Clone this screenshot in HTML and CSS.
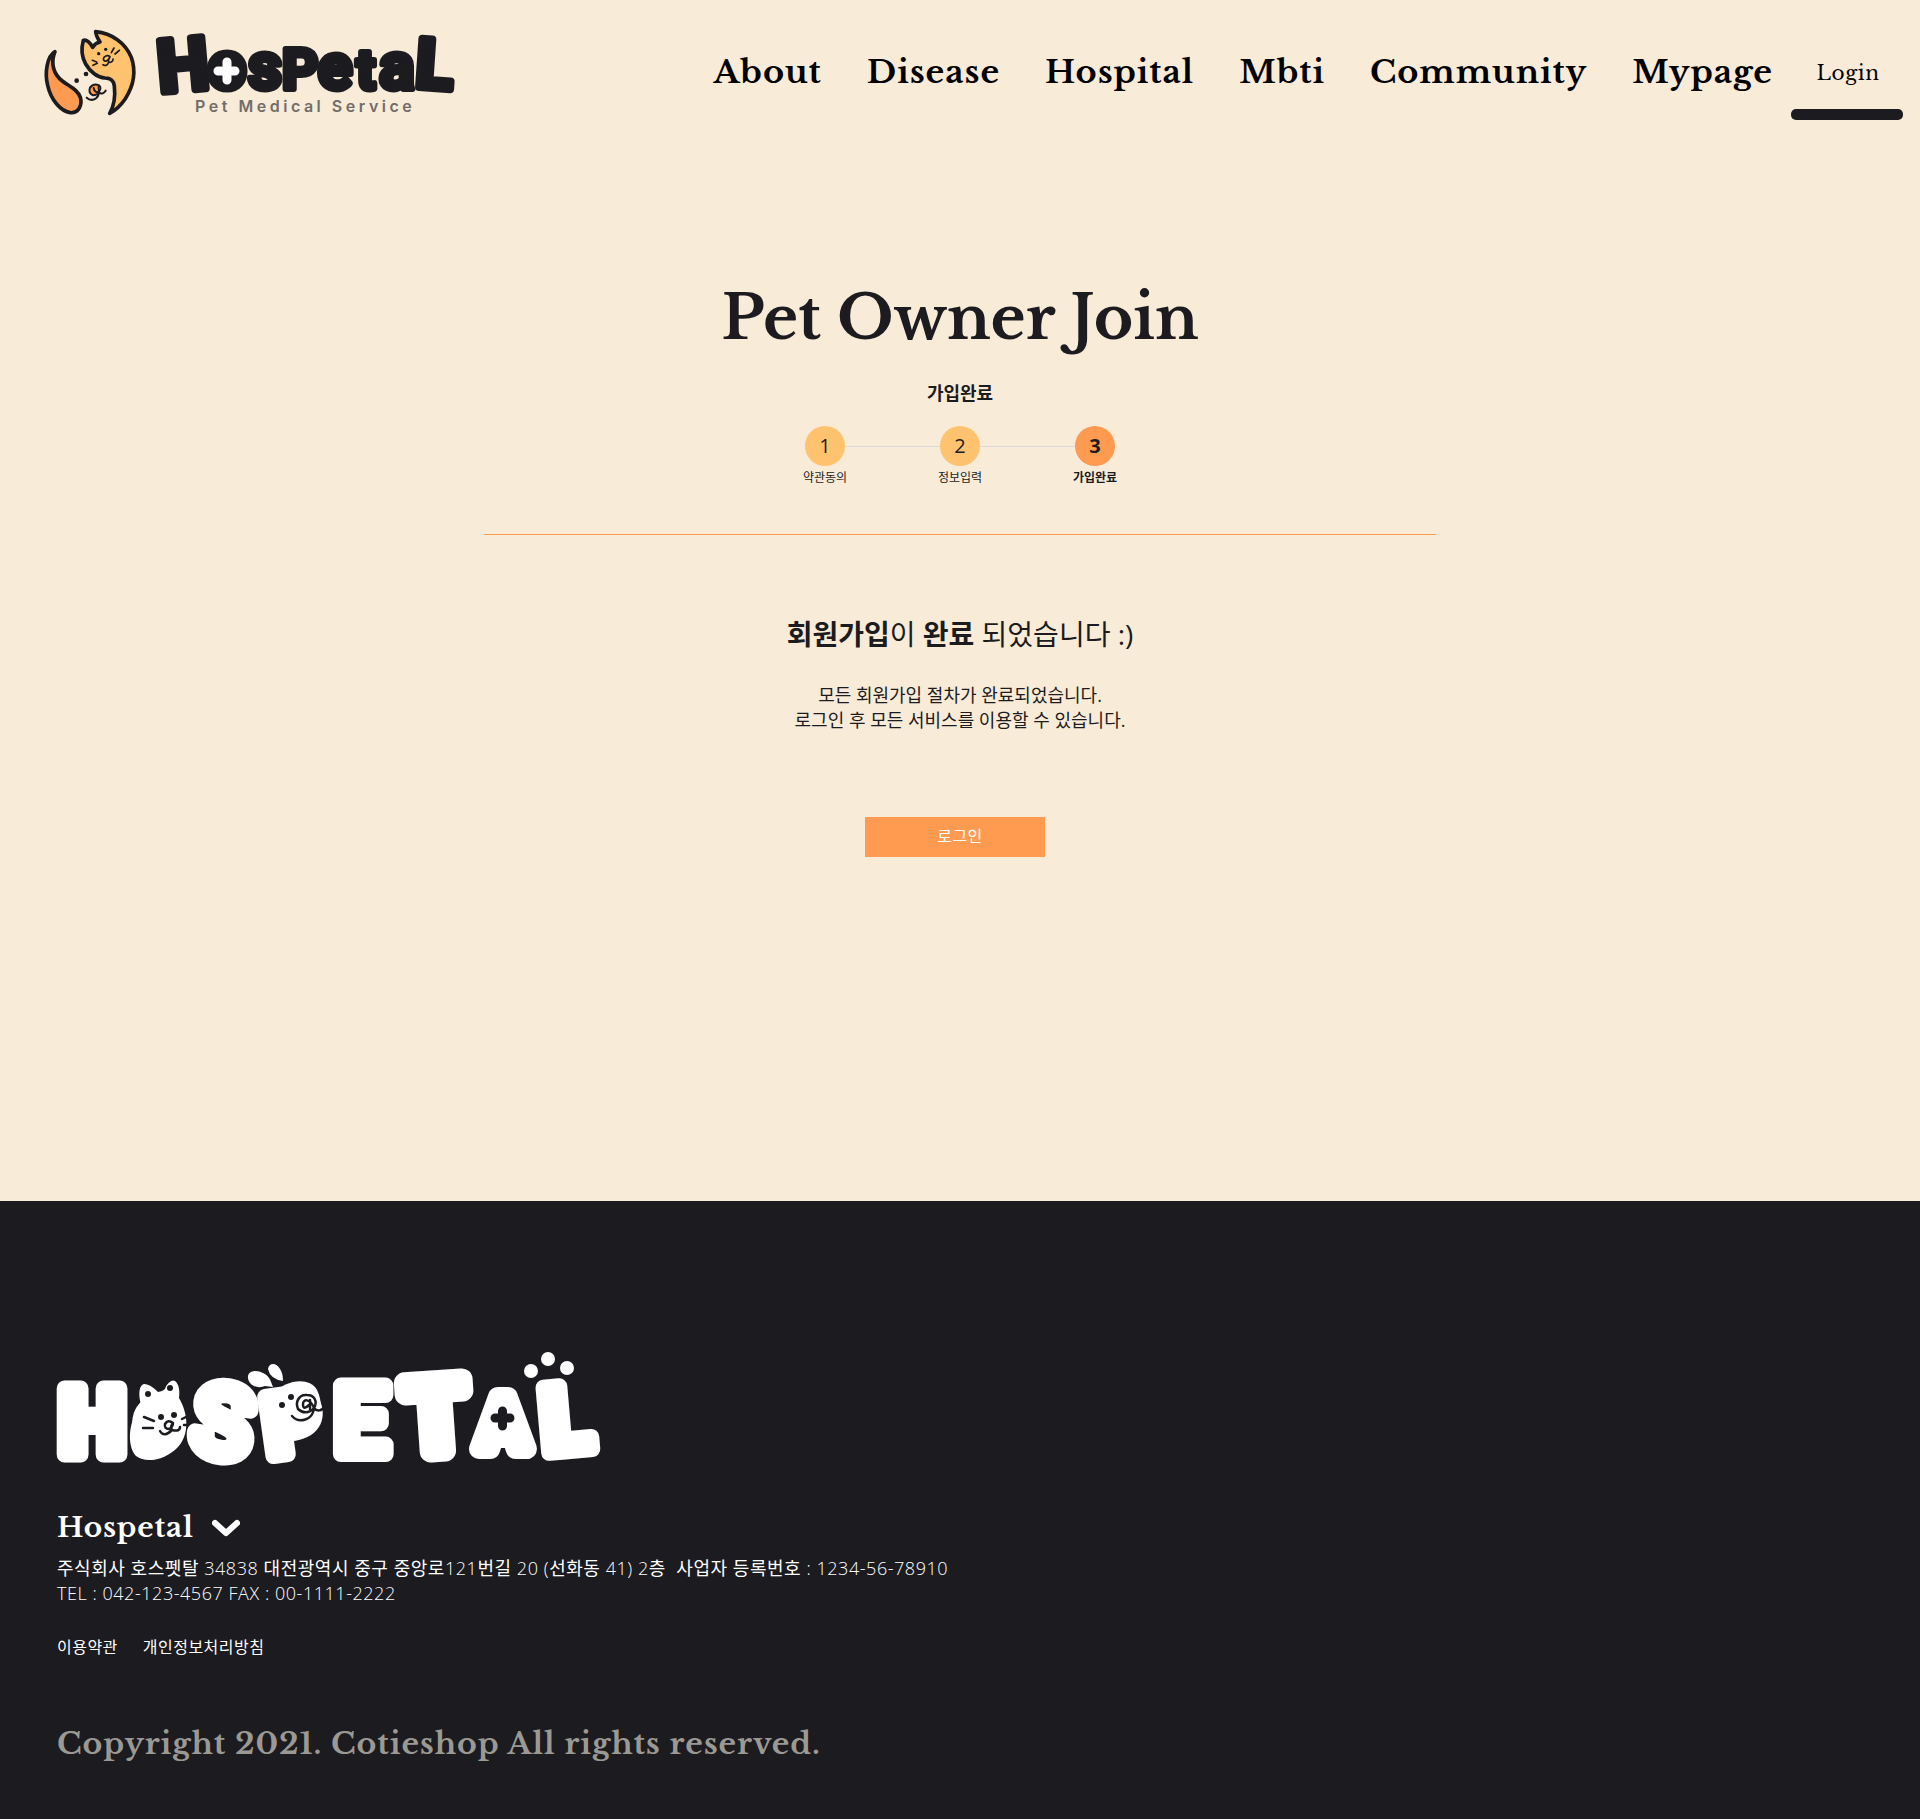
FILE: index.html
```html
<!DOCTYPE html>
<html lang="ko">
<head>
<meta charset="utf-8">
<meta name="viewport" content="width=device-width, initial-scale=1">
<title>Hospetal</title>
<link rel="stylesheet" href="styles.css">
</head>
<body>
<header class="header">
  <a class="brand" href="#" aria-label="Hospetal Pet Medical Service">
    <svg class="mascot" viewBox="36 24 300 264" aria-hidden="true">
      <g fill="none" stroke="#1c1b20" stroke-linecap="round" stroke-linejoin="round">
        <path d="M75 95C50 110 44 160 53 196C63 241 92 273 121 278C145 280 158 256 151 232C143 207 117 199 97 183C70 162 61 129 75 95Z" fill="#ff9b50" stroke-width="11"/>
        <path d="M197 35C246 40 286 69 304 112C319 155 310 198 286 236C273 255 257 271 239 280C252 258 256 225 253 198C251 180 241 174 225 174C203 173 180 155 167 132C154 109 154 83 160 61C169 57 181 69 188 82C193 73 201 68 210 66C204 57 198 47 197 35Z" fill="#ffc26f" stroke-width="11"/>
        <path d="M219 134Q231 141 236 127Q249 128 249 117M236 127Q234 118 240 110Q232 103 223 111Q217 119 224 123Q233 126 240 110M187 121L200 126M189 136L202 130M244 98L252 84M255 102L268 91" stroke-width="5"/>
        <path d="M170 233Q183 245 198 235Q207 228 206 217Q218 226 227 212" stroke-width="6"/>
        <path d="M206 217Q216 204 207 196Q190 189 180 203Q174 219 189 226Q202 225 206 217Q194 218 191 204" fill="#ff9b50" stroke-width="6"/>
        <path d="M205 199L206 216" stroke-width="4"/>
      </g>
      <g fill="#1c1b20"><circle cx="206" cy="101" r="5"/><circle cx="227" cy="88" r="5"/><circle cx="168" cy="162" r="7"/><circle cx="140" cy="182" r="7"/></g>
    </svg>
    <svg class="wordmark" viewBox="155 28 300 88" aria-hidden="true">
      <g class="wordmark-letters">
        <text font-size="72" transform="translate(185 90) rotate(-5)" stroke-width="8">H</text>
        <text font-size="62" x="227" y="87" stroke-width="10">o</text>
        <text font-size="66" x="265" y="89">s</text>
        <text font-size="56" x="300" y="89">P</text>
        <text font-size="64" x="335" y="89">e</text>
        <text font-size="56" x="366" y="89">t</text>
        <text font-size="66" x="397" y="89">a</text>
        <text font-size="68" transform="translate(433 88) rotate(4)" stroke-width="8">L</text>
      </g>
      <path d="M227 62V80M218 71H235" fill="none" stroke="#fff" stroke-width="9" stroke-linecap="round"/>
      <text class="tagline" x="195" y="112">Pet Medical Service</text>
    </svg>
  </a>
  <nav class="nav">
    <a href="#">About</a>
    <a href="#">Disease</a>
    <a href="#">Hospital</a>
    <a href="#">Mbti</a>
    <a href="#">Community</a>
    <a href="#">Mypage</a>
  </nav>
  <a class="login-link" href="#">Login</a>
</header>

<main class="main">
  <h1 class="title">Pet Owner Join</h1>
  <p class="subtitle">가입완료</p>
  <ol class="steps">
    <li class="step"><span class="step-number">1</span><span class="step-label">약관동의</span></li>
    <li class="step"><span class="step-number">2</span><span class="step-label">정보입력</span></li>
    <li class="step step-current"><span class="step-number">3</span><span class="step-label">가입완료</span></li>
  </ol>
  <section class="result">
    <h2 class="result-title"><strong>회원가입</strong>이 <strong>완료</strong> 되었습니다 :)</h2>
    <p class="result-text">모든 회원가입 절차가 완료되었습니다.<br>로그인 후 모든 서비스를 이용할 수 있습니다.</p>
    <button class="login-button" type="button">로그인</button>
  </section>
</main>

<footer class="footer">
  <svg class="footer-logo" viewBox="57 1352 546 116" role="img" aria-label="Hospetal">
    <g class="footer-letters">
      <text font-size="92" x="92" y="1455" font-weight="900">H</text>
      <text font-size="60" x="158" y="1446">O</text>
      <text font-size="98" transform="translate(218 1456) rotate(8)">S</text>
      <text font-size="84" transform="translate(296 1453) rotate(-8)" font-weight="900">P</text>
      <text font-size="96" x="361" y="1454">E</text>
      <text font-size="98" transform="translate(438 1451) rotate(-4)" font-weight="700" stroke-width="22">T</text>
      <text font-size="72" x="503" y="1449" font-weight="700" stroke-width="20">A</text>
      <text font-size="92" transform="translate(569 1451) rotate(-5)" font-weight="900">L</text>
    </g>
    <path d="M141 1405C138 1394 139 1385 144 1384C149 1384 154 1388 158 1392Q162 1392 165 1389C167 1383 172 1379 175 1381C179 1384 180 1391 179 1398C189 1415 189 1435 178 1447C166 1460 146 1464 136 1456C126 1445 129 1419 141 1405Z" fill="#fff"/>
    <path d="M248 1378C247 1371 256 1369 263 1373C270 1376 271 1382 273 1387L265 1386C258 1389 249 1386 248 1378ZM268 1369C269 1363 276 1362 280 1369Q283 1373 283 1381Q270 1379 268 1369Z" fill="#fff"/>
    <path d="M273 1394C285 1380 309 1376 317 1390C324 1404 323 1430 306 1430L281 1429Z" fill="#fff"/>
    <g fill="#fff"><circle cx="531" cy="1371" r="7"/><circle cx="548" cy="1359" r="7"/><circle cx="567" cy="1368" r="7"/></g>
    <g fill="#1c1b20"><circle cx="148" cy="1394" r="3"/><circle cx="170" cy="1388" r="3"/><circle cx="161" cy="1417" r="3"/><circle cx="174" cy="1415" r="3"/><circle cx="282" cy="1405" r="3"/><circle cx="291" cy="1397" r="3"/></g>
    <g fill="none" stroke="#1c1b20" stroke-width="2.500" stroke-linecap="round" stroke-linejoin="round">
      <path d="M160 1431Q164 1438 172 1430Q180 1432 180 1427M172 1430Q170 1427 173 1423Q168 1419 165 1424Q164 1429 169 1429Q173 1427 173 1423M144 1417L154 1421M143 1428H153M182 1419L188 1416M184 1425H188"/>
      <path d="M292 1416C299 1424 313 1420 314 1408C317 1412 322 1411 325 1406M314 1408C318 1401 314 1395 307 1395C299 1394 295 1402 298 1409C302 1413 309 1414 314 1408C310 1398 303 1399 303 1404Q303 1411 309 1405M310 1400V1409"/>
    </g>
    <path d="M502.500 1411V1426M495 1418H510" fill="none" stroke="#1c1b20" stroke-width="9" stroke-linecap="round"/>
  </svg>
  <button class="family" type="button" aria-expanded="false">Hospetal
    <svg class="chevron" viewBox="0 0 28 18" aria-hidden="true"><path d="M3 4L14 14L25 4" fill="none" stroke="#fff" stroke-width="6" stroke-linecap="round" stroke-linejoin="round"/></svg>
  </button>
  <address class="address"><span class="ko">주식회사 호스펫탈</span> 34838 <span class="ko">대전광역시 중구 중앙로</span>121<span class="ko">번길</span> 20 (<span class="ko">선화동</span> 41) 2<span class="ko">층</span> &nbsp;<span class="ko">사업자 등록번호</span> : 1234-56-78910<br>TEL : 042-123-4567 FAX : 00-1111-2222</address>
  <nav class="policies"><a href="#">이용약관</a><a href="#">개인정보처리방침</a></nav>
  <p class="copyright">Copyright 2021. Cotieshop All rights reserved.</p>
</footer>
</body>
</html>
```

FILE: styles.css
```css
* { box-sizing: border-box; margin: 0; padding: 0; }

body {
  display: flex;
  flex-direction: column;
  min-height: 100vh;
  background: #f8ebd8;
  color: #1c1b20;
  font-family: "Open Sans", "Noto Sans CJK KR", sans-serif;
  font-size: 18px;
  line-height: 25px;
}

a { color: inherit; text-decoration: none; }
button { border: 0; background: none; color: inherit; font: inherit; cursor: pointer; }

.header {
  display: flex;
  align-items: center;
  padding: 28px 17px 28px 42px;
  color: #000;
  font-family: "Libre Baskerville", "Liberation Serif", serif;
  letter-spacing: .03em;
}
.brand { display: flex; gap: 13px; }
.mascot { width: 100px; height: 88px; }
.wordmark { width: 300px; height: 88px; overflow: visible; }
.wordmark-letters {
  fill: #1c1b20;
  stroke: #1c1b20;
  stroke-width: 6px;
  stroke-linejoin: round;
  text-anchor: middle;
  font-family: Roboto, sans-serif;
  font-weight: 700;
  letter-spacing: 0;
}
.tagline {
  fill: #706d6a;
  font-family: Inter, sans-serif;
  font-size: 16px;
  font-weight: 600;
  letter-spacing: .22em;
}
.nav {
  display: flex;
  gap: 45px;
  margin-left: auto;
  font-size: 32px;
  font-weight: 700;
  line-height: 44px;
  letter-spacing: .03em;
}
.login-link {
  position: relative;
  display: flex;
  align-items: center;
  align-self: stretch;
  justify-content: center;
  width: 112px;
  margin-left: 18px;
  padding: 2px 0 0 2px;
  font-size: 20px;
  letter-spacing: .03em;
}
.login-link::after {
  content: "";
  position: absolute;
  bottom: -4px;
  left: 0;
  width: 100%;
  height: 11px;
  border-radius: 5px;
  background: #1c1b20;
}

.main {
  flex: 1;
  width: 100%;
  max-width: 952px;
  margin: 0 auto;
  padding-top: 130px;
  text-align: center;
}
.title {
  font-family: "Libre Baskerville", "Liberation Serif", serif;
  font-size: 60px;
  line-height: 88px;
}
.subtitle { margin-top: 19px; font-weight: 700; line-height: 24px; }
.steps {
  display: flex;
  justify-content: center;
  padding: 21px 0 47px;
  border-bottom: 1px solid #ff9b50;
  list-style: none;
}
.step {
  position: relative;
  display: flex;
  flex-direction: column;
  align-items: center;
  gap: 3px;
  width: 135px;
}
.step + .step::before {
  content: "";
  position: absolute;
  top: 20px;
  right: 50%;
  width: 100%;
  height: 1px;
  background: #d9d9d9;
}
.step-number {
  z-index: 1;
  width: 40px;
  height: 40px;
  border-radius: 50%;
  background: #ffc26f;
  font-size: 20px;
  line-height: 40px;
}
.step:first-child .step-number { z-index: 2; }
.step-label { font-size: 12px; line-height: 18px; }
.step-current { font-weight: 700; }
.step-current .step-number { background: #ff9b50; }

.result { padding: 79px 0; }
.result-title { font-size: 28px; font-weight: 400; line-height: 40px; }
.result-title strong { font-weight: 700; }
.result-text { margin-top: 29px; }
.login-button {
  width: 180px;
  height: 40px;
  margin: 84px 10px 0 0;
  padding: 0 0 2px 10px;
  background: #ff9b50;
  color: #fff;
  font-size: 16px;
  letter-spacing: .03em;
}

.footer {
  padding: 151px 57px 53px;
  background: #1c1b20;
  color: #fff;
  letter-spacing: .03em;
}
.footer-logo { display: block; width: 546px; height: 116px; max-width: 100%; overflow: visible; }
.footer-letters {
  fill: #fff;
  stroke: #fff;
  stroke-width: 16px;
  stroke-linejoin: round;
  text-anchor: middle;
  font-family: Roboto, sans-serif;
  font-weight: 500;
  letter-spacing: 0;
}
.family {
  display: flex;
  align-items: center;
  gap: 18px;
  margin-top: 38px;
  font-family: "Libre Baskerville", "Liberation Serif", serif;
  font-size: 28px;
  font-weight: 700;
  line-height: 44px;
  letter-spacing: .03em;
}
.chevron { width: 28px; height: 18px; }
.address {
  margin-top: 6px;
  font-style: normal;
  font-weight: 300;
  letter-spacing: .03em;
}
.ko { font-weight: 400; }
.policies { display: flex; gap: 25px; margin-top: 29px; font-size: 16px; line-height: 24px; letter-spacing: .03em; }
.copyright {
  margin-top: 63px;
  color: #9b9993;
  font-family: "Libre Baskerville", "Liberation Serif", serif;
  font-size: 30px;
  font-weight: 700;
  line-height: 44px;
  letter-spacing: .03em;
}
@media (max-width: 1500px) {
  .header, .nav { flex-wrap: wrap; }
}
```
